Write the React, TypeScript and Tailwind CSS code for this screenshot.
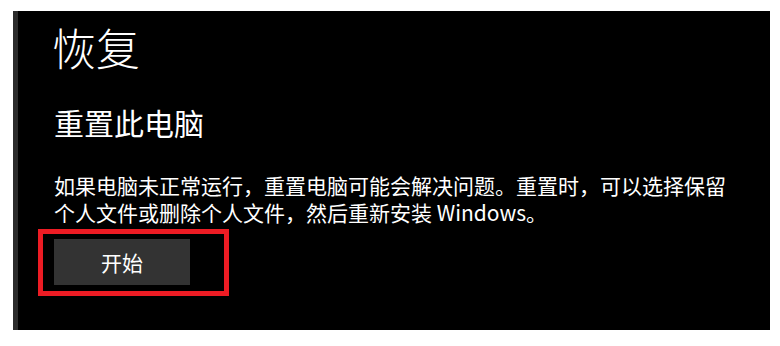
export default function App() {
  return (
    <div
      className="h-[346px] w-[780px] bg-white overflow-hidden pt-[11px] pl-[13px]"
      style={{ fontFamily: '"Noto Sans CJK SC", "Noto Sans", sans-serif' }}
    >
      <div className="flex h-[319px] w-[757px] bg-black">
        <div className="w-[5px] bg-[#2b2b2b]" />
        <div className="flex flex-col items-start pl-[36px] text-white">
          {/* Page title */}
          <h1 className="-ml-[2px] mt-[14px] text-[44px] font-light leading-none">恢复</h1>

          {/* Section */}
          <h2 className="mt-[38px] text-[30px] leading-none">重置此电脑</h2>
          <p className="mt-[35px] w-[682px] text-[21px] leading-[27px]">
            如果电脑未正常运行，重置电脑可能会解决问题。重置时，可以选择保留个人文件或删除个人文件，然后重新安装 Windows。
          </p>

          <div className="relative mt-[13px]">
            <button className="h-[46px] w-[136px] bg-[#333333] text-[21px] leading-none text-white">
              开始
            </button>
            {/* highlight annotation */}
            <div className="pointer-events-none absolute -left-[16px] -top-[10px] h-[67px] w-[191px] border-[5px] border-[#ed1c24]" />
          </div>
        </div>
      </div>
    </div>
  );
}
